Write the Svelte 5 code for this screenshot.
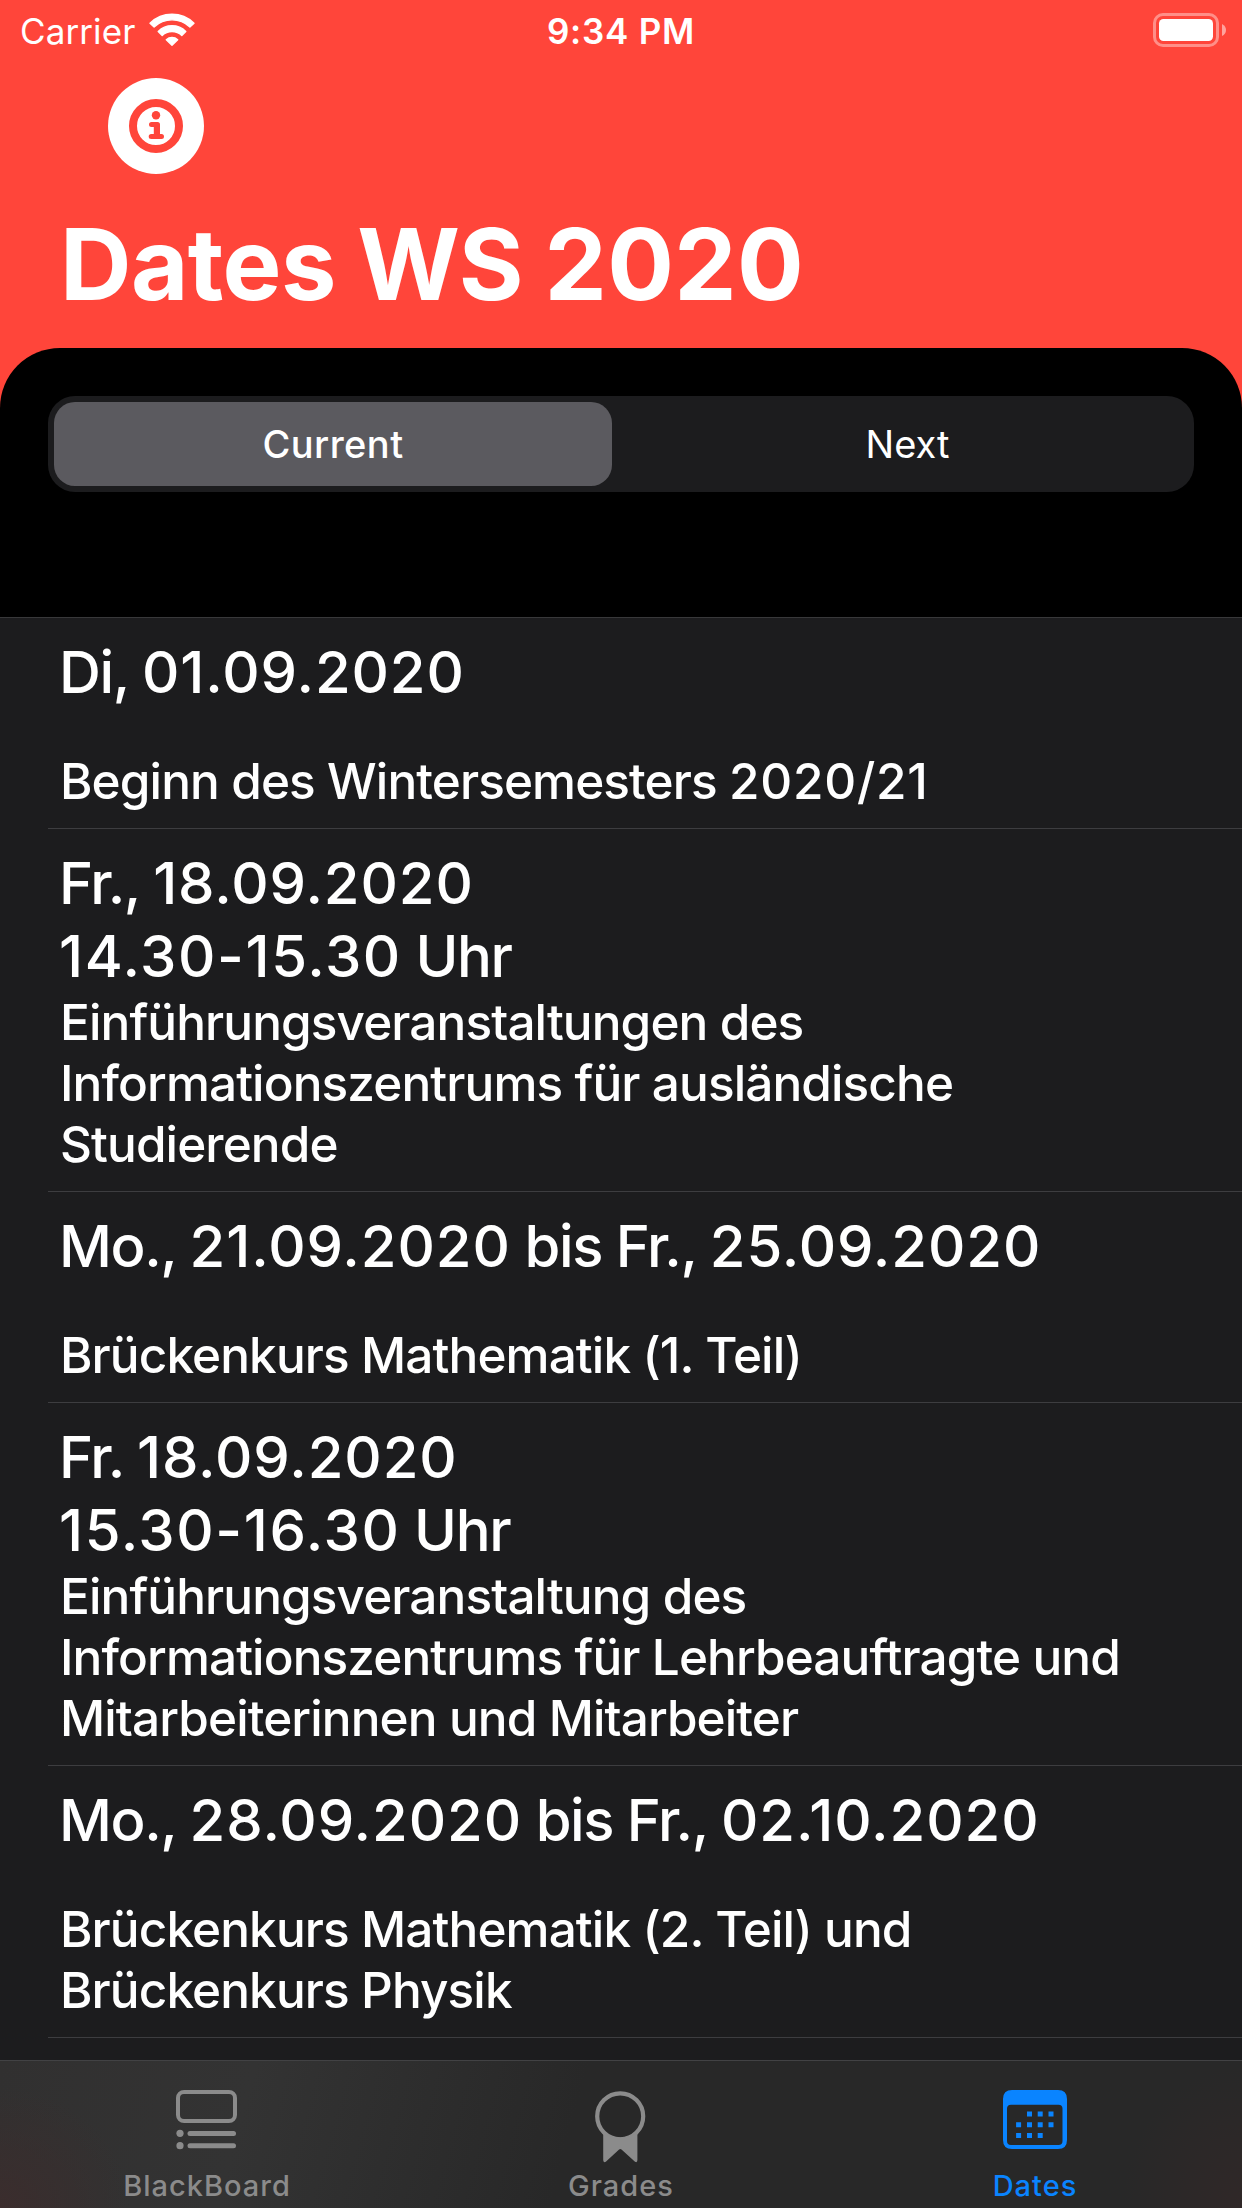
<script>
  let selected = $state('Current');

  const segments = ['Current', 'Next'];

  const events = [
    { date: ['Di, 01.09.2020'], text: ['Beginn des Wintersemesters 2020/21'] },
    {
      date: ['Fr., 18.09.2020', '14.30-15.30 Uhr'],
      text: ['Einführungsveranstaltungen des', 'Informationszentrums für ausländische', 'Studierende']
    },
    { date: ['Mo., 21.09.2020 bis Fr., 25.09.2020'], text: ['Brückenkurs Mathematik (1. Teil)'] },
    {
      date: ['Fr. 18.09.2020', '15.30-16.30 Uhr'],
      text: ['Einführungsveranstaltung des', 'Informationszentrums für Lehrbeauftragte und', 'Mitarbeiterinnen und Mitarbeiter']
    },
    {
      date: ['Mo., 28.09.2020 bis Fr., 02.10.2020'],
      text: ['Brückenkurs Mathematik (2. Teil) und', 'Brückenkurs Physik']
    }
  ];

  // Splits a line into words and figure runs, so figures can be tracked wider.
  const runs = (line) => line.split(/(\d[\d./-]*\d)/).filter(Boolean);
</script>

{#snippet tracked(line)}{#each runs(line) as run}{#if /^\d/.test(run)}<b>{run}</b>{:else}{run}{/if}{/each}{/snippet}

<div class="screen">
  <header>
    <div class="status">
      <div class="carrier">
        <span>Carrier</span>
        <svg width="46" height="34" viewBox="0 0 46 34" fill="#fff" stroke="#fff" stroke-width="1.4" stroke-linejoin="round">
          <path d="M1 10.2A31.5 31.5 0 0 1 45 10.2L40.9 14A26 26 0 0 0 5.1 14Z" />
          <path d="M9.2 18.5A19.6 19.6 0 0 1 36.8 18.5L32.8 22.4A14.2 14.2 0 0 0 13.2 22.4Z" />
          <path d="M17.3 26.8A8.4 8.4 0 0 1 28.7 26.8L23 32.3Z" />
        </svg>
      </div>
      <span class="time">9:34 PM</span>
      <svg class="battery" width="74" height="34" viewBox="0 0 74 34">
        <rect x="1.5" y="1.5" width="63" height="31" rx="8.5" fill="none" stroke="#fff" stroke-opacity=".4" stroke-width="3" />
        <rect x="6" y="6" width="54" height="22" rx="4.5" fill="#fff" />
        <path d="M69 11Q73 13 73 17T69 23Z" fill="#fff" fill-opacity=".5" />
      </svg>
    </div>
    <button class="info" aria-label="Info">
      <svg width="96" height="96" viewBox="0 0 96 96">
        <circle cx="48" cy="48" r="48" fill="#fff" />
        <circle cx="48" cy="48" r="23" fill="none" stroke="#ff453a" stroke-width="8" />
        <g fill="#ff453a">
          <circle cx="48" cy="37.2" r="4.2" />
          <path d="M43.5 44H49.5Q52 44 52 46.5V56H53.5A2.5 2.5 0 0 1 53.5 61H43.2A2.5 2.5 0 0 1 43.2 56H45.8V49H43.5A2.5 2.5 0 0 1 43.5 44Z" />
        </g>
      </svg>
    </button>
    <h1>{@render tracked('Dates WS 2020')}</h1>
  </header>

  <div class="backdrop">
    <section class="sheet">
      <div class="segmented">
        {#each segments as s}
          <button class:active={selected === s} onclick={() => (selected = s)}>{s}</button>
        {/each}
      </div>
    </section>
  </div>

  <ul>
    {#each events as e}
      <li class:timed={e.date.length > 1}>
        <h2>
          {#each e.date as line, i}<span class:hours={i > 0}>{@render tracked(line)}</span>{/each}
        </h2>
        <p>
          {#each e.text as line}<span>{@render tracked(line)}</span>{/each}
        </p>
      </li>
    {/each}
  </ul>

  <nav>
    <a href="#blackboard">
      <svg width="72" height="76" viewBox="0 0 72 76" fill="currentColor">
        <rect x="7" y="5" width="57" height="29" rx="6" fill="none" stroke="currentColor" stroke-width="4" />
        <circle cx="9" cy="46.3" r="3.6" />
        <circle cx="9" cy="58.7" r="3.6" />
        <rect x="16.5" y="44" width="48.5" height="5" rx="2.5" />
        <rect x="16.5" y="56.2" width="48.5" height="5" rx="2.5" />
      </svg>
      <span>BlackBoard</span>
    </a>
    <a href="#grades">
      <svg width="72" height="76" viewBox="0 0 72 76" fill="currentColor">
        <circle cx="35.2" cy="29.3" r="23" fill="none" stroke="currentColor" stroke-width="4.2" />
        <path d="M18.2 46Q35.2 55 52.4 46V73Q52.4 76 50 74.8L36.5 62.5Q35.3 61.5 34.1 62.5L20.8 74.8Q18.2 76 18.2 73Z" />
      </svg>
      <span>Grades</span>
    </a>
    <a href="#dates" class="current">
      <svg width="72" height="76" viewBox="0 0 72 76" fill="currentColor">
        <path
          fill-rule="evenodd"
          d="M13 3H59Q68 3 68 12V53Q68 62 59 62H13Q4 62 4 53V12Q4 3 13 3ZM12 17.7Q8 17.7 8 21.7V54Q8 58 12 58H59.5Q63.5 58 63.5 54V21.7Q63.5 17.7 59.5 17.7Z"
        />
        <path
          d="M30.5 24.6v5M41.2 24.6v5M52 24.6v5M19.6 35.2v5M30.5 35.2v5M41.2 35.2v5M52 35.2v5M19.6 46v5M30.5 46v5M41.2 46v5"
          stroke="currentColor"
          stroke-width="5"
        />
      </svg>
      <span>Dates</span>
    </a>
  </nav>
</div>

<style>
  :global(body) {
    margin: 0;
    background: #1c1c1e;
  }
  .screen {
    width: 1242px;
    height: 2208px;
    display: flex;
    flex-direction: column;
    overflow: hidden;
    background: #1c1c1e;
    color: #fff;
    font-family: Inter, 'Liberation Sans', sans-serif;
  }
  button {
    border: 0;
    padding: 0;
    background: none;
    color: inherit;
    font-family: inherit;
  }
  b {
    font-weight: inherit;
  }
  header {
    height: 348px;
    flex: none;
    background: #ff453a;
  }
  .status {
    height: 60px;
    display: grid;
    grid-template-columns: 1fr auto 1fr;
    padding: 0 15px;
    line-height: 62px;
    font-size: 35px;
  }
  .carrier {
    display: flex;
    padding-left: 5px;
    letter-spacing: 0.1px;
  }
  .carrier svg {
    margin: 13px 0 0 14px;
  }
  .time {
    font-weight: 600;
    letter-spacing: 0.75px;
  }
  .battery {
    margin-top: 13px;
    justify-self: end;
  }
  .info {
    display: block;
    width: 96px;
    height: 96px;
    margin: 18px 0 0 108px;
  }
  .info svg {
    display: block;
  }
  h1 {
    margin: 30px 0 0 60px;
    font-size: 99px;
    line-height: 120px;
    font-weight: 700;
    letter-spacing: -0.55px;
    word-spacing: -1.6px;
  }
  h1 b {
    letter-spacing: 0.4px;
  }
  .backdrop {
    flex: none;
    background: linear-gradient(#ff453a 60px, #000 60px);
  }
  .sheet {
    height: 269px;
    box-sizing: border-box;
    padding: 48px 48px 0;
    background: #000;
    border-radius: 60px 60px 0 0;
  }
  .segmented {
    height: 96px;
    box-sizing: border-box;
    padding: 6px;
    display: grid;
    grid-template-columns: 558px 1fr;
    border-radius: 27px;
    background: #1c1c1e;
  }
  .segmented button {
    border-radius: 21px;
    font-size: 38px;
    font-weight: 400;
    padding-left: 15px;
  }
  .segmented .active {
    padding: 0;
    background: #5b5a5f;
    font-weight: 500;
    letter-spacing: 0.45px;
  }
  ul {
    margin: 0;
    padding: 0;
    flex: 1;
    list-style: none;
    border-top: 1px solid #38383a;
    overflow: hidden;
  }
  li {
    margin-left: 48px;
    padding: 18px 0 16px 12px;
    border-bottom: 1px solid #3d3d40;
    white-space: nowrap;
  }
  h2,
  p {
    margin: 0;
    font-weight: 450;
  }
  h2 span,
  p span {
    display: block;
  }
  h2 {
    font-size: 58px;
    line-height: 72.5px;
    letter-spacing: -1.4px;
    word-spacing: -0.4px;
    margin-left: -1px;
    margin-bottom: 42.5px;
  }
  h2 b {
    letter-spacing: 0.9px;
  }
  .hours b {
    letter-spacing: 1.6px;
  }
  .timed h2 {
    margin-bottom: 0;
  }
  p {
    font-size: 49.5px;
    line-height: 61px;
    letter-spacing: -0.9px;
  }
  p b {
    letter-spacing: 0.75px;
  }
  nav {
    height: 148px;
    flex: none;
    box-sizing: border-box;
    display: grid;
    grid-template-columns: repeat(3, 1fr);
    border-top: 1px solid #424244;
    background:
      radial-gradient(ellipse 130px 120px at 0 100%, #3b2d2d, transparent),
      radial-gradient(ellipse 120px 140px at 100% 100%, #302828, transparent),
      linear-gradient(105deg, #313030 0, #333 20%, #282828 46%, #282828 100%);
  }
  nav a {
    display: flex;
    flex-direction: column;
    align-items: center;
    padding-top: 26px;
    color: #8b8b8b;
    text-decoration: none;
    font-size: 29px;
    font-weight: 500;
    line-height: 34px;
    letter-spacing: 1px;
  }
  nav svg {
    display: block;
    margin-bottom: 6px;
  }
  nav .current {
    color: #0a84ff;
  }
</style>
